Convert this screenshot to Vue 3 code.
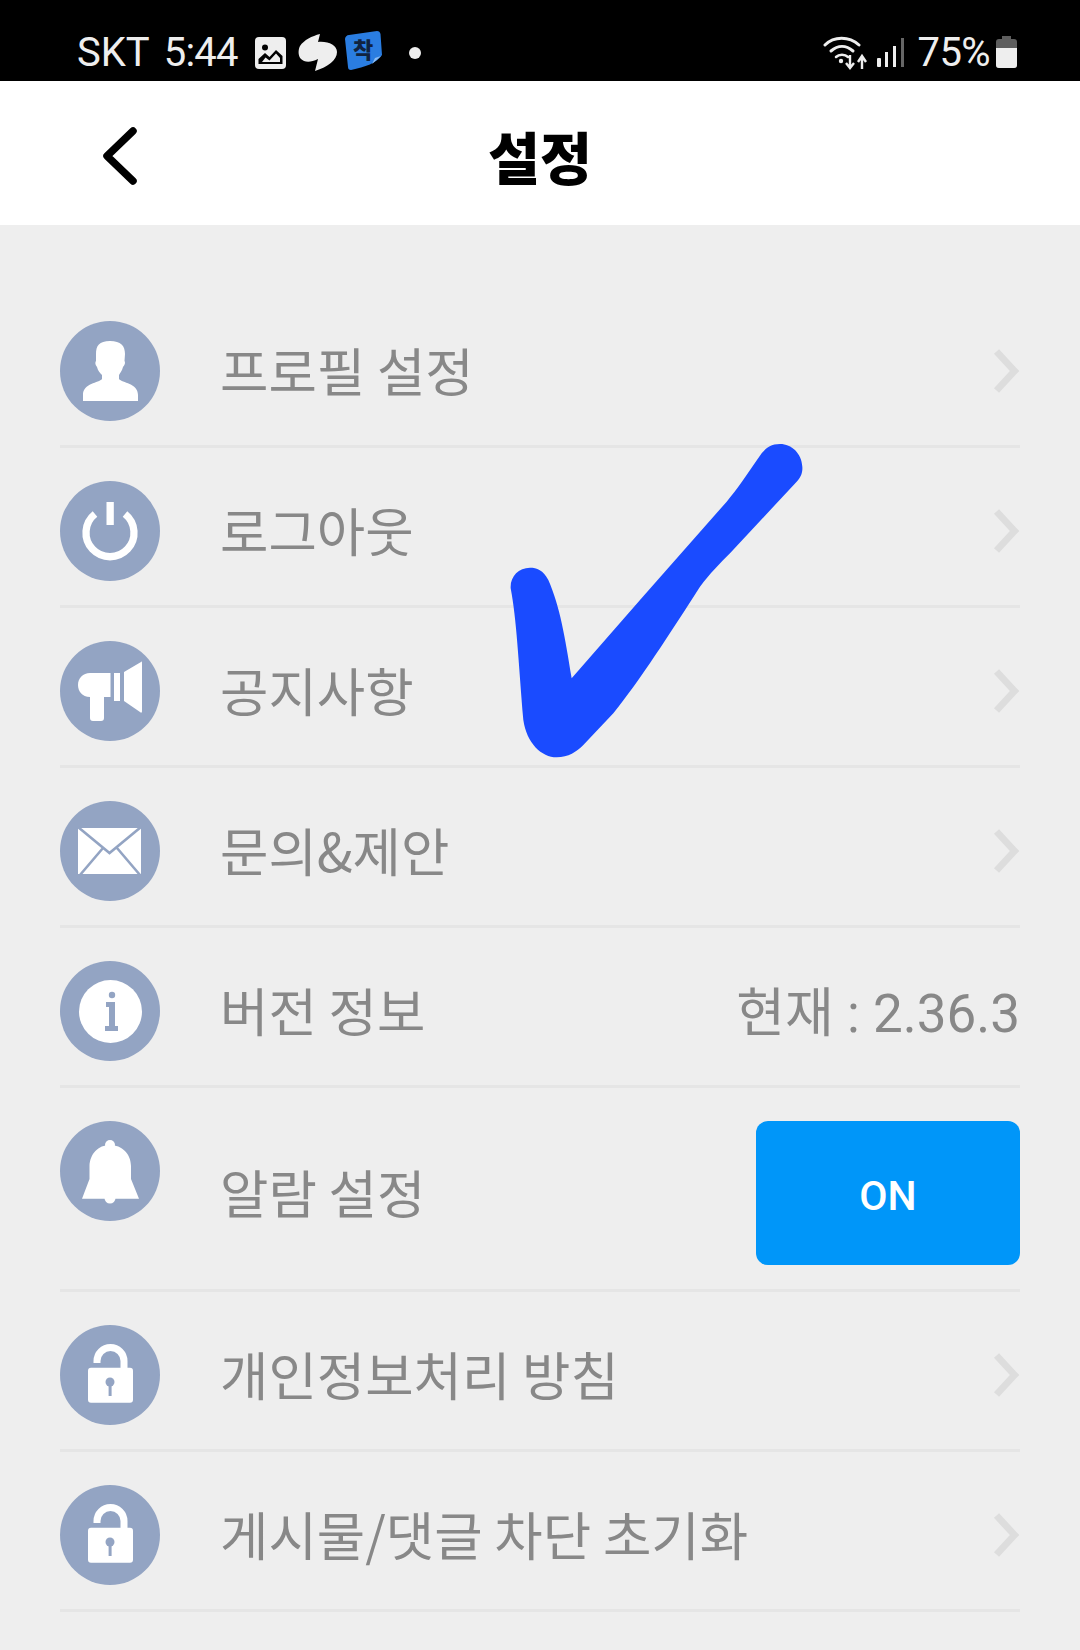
<script setup>
const rows = [
  { icon: 'person', label: '프로필 설정' },
  { icon: 'power', label: '로그아웃' },
  { icon: 'horn', label: '공지사항' },
  { icon: 'mail', label: '문의&제안' },
  { icon: 'info', label: '버전 정보', value: '현재 : 2.36.3' },
  { icon: 'bell', label: '알람 설정', toggle: 'ON' },
  { icon: 'lock', label: '개인정보처리 방침' },
  { icon: 'lock', label: '게시물/댓글 차단 초기화' },
]
</script>

<template>
  <div class="page">
    <div class="status">
      <div class="status-left">
        <span class="carrier">SKT</span>
        <span class="clock">5:44</span>
        <svg class="ic-gallery" width="31" height="32" viewBox="0 0 31 32">
          <rect width="31" height="32" rx="4" fill="#eee" />
          <circle cx="10" cy="10.5" r="3" fill="#000" />
          <path d="M3.5 27 V22 L10 16 L14.5 20 L21 13 L27.5 19 V27Z" fill="#000" />
          <path d="M7 25 L10.5 20.5 L14.5 23.5 L21 16.5 L25 21 V25Z" fill="#eee" />
        </svg>
        <svg class="ic-swirl" width="40" height="38" viewBox="0 0 40 38">
          <path d="M22 0 L20 8 C30 7 39 11 39 18 C39 26 30 33 17 37 L20 25 C12 29 6 28 3 25 C0 22 0 16 2 12 C6 6 14 2 22 0Z" fill="#eee" />
        </svg>
        <svg class="ic-note" width="38" height="40" viewBox="0 0 38 40">
          <path d="M4 4 L32 0 C34 0 35 1 35.5 3 L37 24 C32 32 20 36 6 39 C4 39 3 38 3 36 L0 8 C0 6 2 4 4 4Z" fill="#2a7de1" />
          <path d="M27 33 L36 25 L30 27Z" fill="#8dbcf0" />
          <text x="18" y="27" class="note-text">착</text>
        </svg>
        <span class="dot"></span>
      </div>
      <div class="status-right">
        <svg class="ic-wifi" width="46" height="34" viewBox="0 0 46 34">
          <g fill="none" stroke="#eee" stroke-width="3" stroke-linecap="round">
            <path d="M2 9 C11 0 26 0 36 9" />
            <path d="M8 15 C15 9 23 9 30 15" />
            <path d="M13 21 C16 18 22 18 25 21" stroke-width="2.5" />
          </g>
          <circle cx="18" cy="25" r="2.2" fill="#eee" />
          <g fill="none" stroke="#eee" stroke-width="2.4">
            <path d="M27 19 V31 M23 27 L27 32 L31 27" />
            <path d="M39 33 V21 M35 26 L39 20 L43 26" />
          </g>
        </svg>
        <svg class="ic-signal" width="28" height="30" viewBox="0 0 28 30">
          <rect x="0" y="20" width="4" height="9" rx="1" fill="#eee" />
          <rect x="8" y="14" width="3" height="15" fill="#eee" />
          <rect x="16" y="8" width="3" height="21" fill="#eee" />
          <rect x="24" y="0" width="3" height="29" fill="#666" />
        </svg>
        <span class="battery-text">75%</span>
        <svg class="ic-battery" width="22" height="33" viewBox="0 0 22 33">
          <path d="M6 0 H15 V3 H18 C20 3 21 4 21 6 V29 C21 31 20 32 18 32 H3 C1 32 0 31 0 29 V6 C0 4 1 3 3 3 H6Z" fill="#5e5e5e" />
          <path d="M0 12 H21 V29 C21 31 20 32 18 32 H3 C1 32 0 31 0 29Z" fill="#eee" />
        </svg>
      </div>
    </div>

    <header class="topbar">
      <div class="back">
        <svg width="40" height="60" viewBox="0 0 40 60">
          <path d="M33 5 L7 30 L33 55" fill="none" stroke="#000" stroke-width="7.5" stroke-linecap="round" stroke-linejoin="round" />
        </svg>
      </div>
      <h1 class="title">설정</h1>
      <div></div>
    </header>

    <main class="list">
      <div v-for="(row, i) in rows" :key="i" class="row">
        <svg class="avatar" width="100" height="100" viewBox="0 0 100 100">
          <circle cx="50" cy="50" r="50" fill="#93a4c3" />
          <path v-if="row.icon === 'person'" fill="#fff" d="M50 20 C61 20 65 25 65 33 L64.5 40 C65.5 41 65 44 63 46 C62 50 60 52 59 54 L59 58 C62 62 78 62 78 74 L78 80 L23 80 L23 74 C23 62 39 62 42 58 L42 54 C40 52 38 50 37 46 C35 44 35 41 36 40 L36 33 C36 25 39 20 50 20Z" />
          <g v-else-if="row.icon === 'power'">
            <path d="M35 33 A24 24 0 1 0 65 33" fill="none" stroke="#fff" stroke-width="7.3" />
            <rect x="46.5" y="21" width="7.3" height="23" fill="#fff" />
          </g>
          <g v-else-if="row.icon === 'horn'" fill="#fff">
            <path d="M81 21 C82 20 82 21 82 23 V70 C82 72 81 72 80 71 L64 60 V31Z" />
            <rect x="54" y="32" width="6" height="28" />
            <path d="M30 32 H50.5 V56 H44 V77 C44 79 43 80 41 80 H33 C31 80 30 79 30 77 V56 C22 56 18 50 18 44 C18 37 23 32 30 32Z" />
          </g>
          <g v-else-if="row.icon === 'mail'">
            <rect x="18" y="27" width="63" height="46" fill="#fff" />
            <path d="M18 26 L49.5 52 L81 26 M20 74 L43 47 M80 74 L57 47" fill="none" stroke="#93a4c3" stroke-width="2.6" />
          </g>
          <g v-else-if="row.icon === 'info'">
            <circle cx="50.5" cy="50.5" r="31.5" fill="#fff" />
            <circle cx="52" cy="34" r="3.2" fill="#93a4c3" />
            <path d="M46 41 H55 V65 H58 V70 H45 V65 H49 V46 H46Z" fill="#93a4c3" />
          </g>
          <g v-else-if="row.icon === 'bell'" fill="#fff">
            <circle cx="50" cy="24" r="5" />
            <circle cx="50" cy="77" r="5.5" />
            <path d="M50 24 C38 24 30 33 29.5 45 L29.5 58 L22 77.7 H79 L71 58 L71 45 C71 33 62 24 50 24Z" />
          </g>
          <g v-else-if="row.icon === 'lock'">
            <path d="M37 38 V36 A13.5 13.5 0 0 1 64 36 V44" fill="none" stroke="#fff" stroke-width="7" />
            <rect x="28" y="42.7" width="45" height="35" rx="3" fill="#fff" />
            <circle cx="50" cy="57" r="4.5" fill="#93a4c3" />
            <rect x="48.6" y="58" width="3" height="13" fill="#93a4c3" />
          </g>
        </svg>

        <span class="label">{{ row.label }}</span>

        <span v-if="row.value" class="value">{{ row.value }}</span>
        <button v-else-if="row.toggle" class="toggle">{{ row.toggle }}</button>
        <svg v-else class="chevron" width="27" height="46" viewBox="0 0 27 46">
          <path d="M3.5 3.5 L21.5 23 L3.5 42.5" fill="none" stroke="#dddddd" stroke-width="7" />
        </svg>
      </div>
    </main>

    <!-- hand drawn mark on top of the list -->
    <svg class="scribble" width="350" height="360" viewBox="0 0 1050 1080">
      <path fill="#1a4bff" d="M845 100 C800 165 770 210 740 245 L480 540 L275 775 C255 650 240 560 205 480 C190 450 170 443 150 443 C115 443 90 470 92 505 C110 600 115 720 130 900 C140 970 185 1012 230 1012 C265 1012 290 995 310 975 L400 880 C480 780 570 640 660 500 C690 460 720 430 750 400 L950 185 C965 170 968 155 967 140 C965 100 935 72 900 72 C875 72 860 82 845 100Z" />
    </svg>
  </div>
</template>

<style>
body {
  background: #eeeeee;
}
</style>

<style scoped>
.page {
  position: relative;
  width: 1080px;
  height: 1650px;
  overflow: hidden;
  background: #eeeeee;
  font-family: Roboto, "Noto Sans CJK KR", sans-serif;
}

.status {
  height: 81px;
  background: #000;
  color: #eee;
  display: flex;
  justify-content: space-between;
  align-items: center;
  padding: 22px 62px 0 77px;
  box-sizing: border-box;
  font-size: 40px;
}
.status-left,
.status-right {
  display: flex;
  align-items: center;
  padding-top: 2px;
}
.carrier {
  margin-right: 14px;
}
.clock {
  margin-right: 17px;
  letter-spacing: -0.8px;
}
.ic-swirl {
  margin-left: 12px;
}
.ic-note {
  margin-left: 7px;
  margin-top: -4px;
}
.note-text {
  font-family: "Noto Sans CJK KR", sans-serif;
  font-size: 22px;
  font-weight: 900;
  fill: #10233f;
  text-anchor: middle;
}
.dot {
  width: 12px;
  height: 12px;
  border-radius: 50%;
  background: #eee;
  margin-left: 26px;
}
.ic-signal {
  margin-left: 8px;
}
.battery-text {
  margin-left: 13px;
  margin-right: 6px;
  letter-spacing: -0.6px;
}

.topbar {
  height: 144px;
  background: #fff;
  display: grid;
  grid-template-columns: 1fr auto 1fr;
  align-items: center;
}
.back {
  padding: 6px 0 0 100px;
  display: flex;
  align-items: center;
}
.title {
  margin: 4px 0 0;
  font-size: 56.5px;
  font-weight: 900;
  color: #000;
  font-family: "Noto Sans CJK KR", sans-serif;
  line-height: 1;
}

.list {
  padding: 63px 60px 0;
}
.row {
  display: flex;
  align-items: center;
  padding: 33px 0 24px;
  border-bottom: 3px solid #e5e5e5;
}
.avatar {
  flex: none;
  align-self: flex-start;
}
.label {
  margin-left: 60px;
  padding-bottom: 3px;
  flex: 1;
  font-size: 52.6px;
  color: #888;
  font-family: "Noto Sans CJK KR", sans-serif;
  line-height: 1;
}
.value {
  font-size: 53px;
  color: #888;
  line-height: 1;
  padding-top: 6px;
}
.toggle {
  width: 264px;
  height: 144px;
  border: none;
  border-radius: 12px;
  background: #0096f9;
  color: #fff;
  font-family: Roboto, sans-serif;
  font-size: 41px;
  font-weight: 500;
  padding: 6px 0 0;
}
.chevron {
  flex: none;
}
.scribble {
  position: absolute;
  left: 480px;
  top: 420px;
}
</style>
